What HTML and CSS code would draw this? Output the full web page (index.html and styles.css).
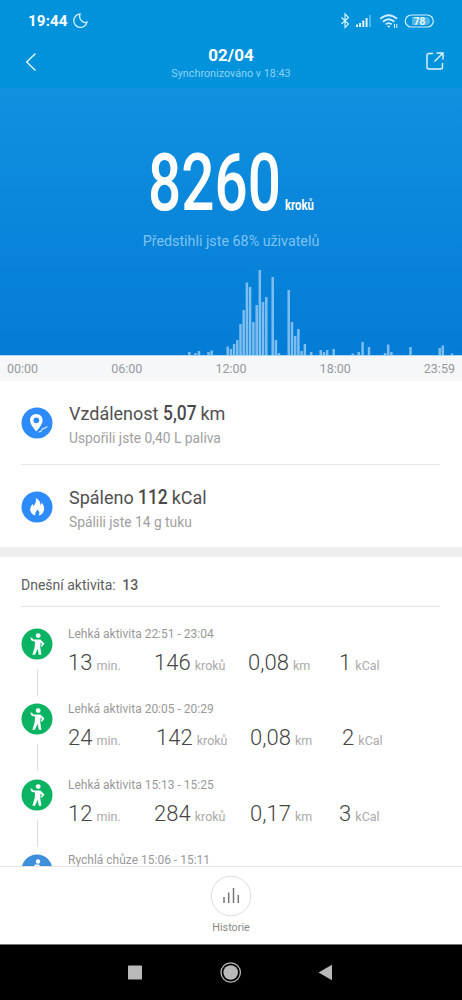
FILE: index.html
```html
<!DOCTYPE html>
<html lang="cs">
<head>
<meta charset="utf-8">
<title>Kroky</title>
<link rel="stylesheet" href="styles.css">
</head>
<body>
<svg class="defs" width="0" height="0">
  <symbol id="person" viewBox="0 0 32 32">
    <circle cx="17.2" cy="7.6" r="2.4"/>
    <path d="M9.2 9.3l2.1.7 1 1.5h7l4.2 4.1-2.6 3.2-.9-.8 1-2.2-1.5-1.1-.2 4.7 1.1 7.3h-2.5l-1.3-6-2.6 6h-2.6l2.2-7.2.5-5.8-3.7-1.2-1.2-3.2z"/>
  </symbol>
</svg>
<header class="top">
  <div class="status">
    <span class="clock">19:44</span>
    <svg class="moon" width="15" height="15" viewBox="0 0 15 15"><path d="M7 1A6.7 6.7 0 1 0 14 9.200C10.500 10.500 5.200 7 7 1Z"/></svg>
    <svg class="indicators" width="96" height="18" viewBox="0 0 96 18">
      <path class="line" d="M1.500 5.500l7 6.500-3.500 3.500V2l3.500 3.500-7 6.500"/>
      <path class="solid" d="M16 12.500h2V15h-2zM19 11h2v4h-2zM22.300 8.500h2V15h-2zM25.600 6h2v9h-2z"/>
      <path class="solid dim" d="M29 3h2v12h-2z"/>
      <path class="line wifi" d="M40.300 6.800Q48.700-.4 57 6.800M43 9.800q5.700-5 11.400 0M45.600 12.400q3.100-2.600 6.200 0"/>
      <path class="solid" d="M46.900 13.800h3.700l-1.800 2zM54 12h1v4h-1zM56.300 12h1v4h-1z"/>
      <rect class="line" x="65.300" y="3" width="28" height="12" rx="6"/>
      <path class="solid dim" d="M72 5h14q4 0 4 4t-4 4H72z"/>
      <text x="79.500" y="12.700">78</text>
    </svg>
  </div>
  <div class="bar">
    <svg class="back" width="12" height="20" viewBox="0 0 12 20"><path d="M10.500 1.500L1.700 10l8.800 8.500"/></svg>
    <div class="heading"><h1>02/04</h1><p>Synchronizováno v 18:43</p></div>
    <svg class="share" width="18" height="18" viewBox="0 0 18 18"><path d="M7 1.500H3Q1 1.500 1 3.500V15q0 2 2 2h11.500q2 0 2-2v-4M10.500 1H17v6.500M17 1L8.500 9.500"/></svg>
  </div>
</header>
<section class="hero">
  <div class="steps"><span class="count">8260</span><span class="unit">kroků</span></div>
  <p class="rank">Předstihli jste 68% uživatelů</p>
  <svg class="chart" width="462" height="90" viewBox="0 0 462 90">
    <path d="M189.300 90v-3M195.500 90v-2M199 90v-4M208.500 90v-3M211.700 90v-4.500M227.700 90v-8.500M230.900 90v-6M234.100 90v-11M237.300 90v-15M240.500 90v-31M243.700 90v-45M246.900 90v-72.500M250.100 90v-68M253.400 90v-33M256.700 90v-50M259.800 90v-85M263 90v-53M266.300 90v-58M272.700 90v-78M275.900 90v-15M279 90v-2M288.700 90v-65M292 90v-33M295.200 90v-19M298.400 90v-26M301.600 90v-4M304.900 90v-11M311.200 90v-3M320.700 90v-5M324 90v-3M327.200 90v-5M333.700 90v-6M352.700 90v-1.500M358.700 90v-3M362.600 90v-13M369 90v-8M385 90v-2M388.200 90v-10.500M391.400 90v-3M410.500 90v-8M439.700 90v-7M442.800 90v-9.500M452 90v-1.500"/>
  </svg>
</section>
<div class="hours"><span>00:00</span><span>06:00</span><span>12:00</span><span>18:00</span><span>23:59</span></div>
<main class="content">
  <section class="summary">
    <div class="fact">
      <svg width="32" height="32" viewBox="0 0 32 32"><circle class="blue" cx="16" cy="16" r="15.500"/><path class="white" fill-rule="evenodd" d="M15.300 7C11.600 7 9 9.800 9 13.300c0 3.300 3 7.400 6.300 11.200 3.200-3.800 6.300-7.800 6.300-11.200C21.600 9.800 19 7 15.300 7zm0 3.400a2.900 2.900 0 1 1 0 5.800 2.900 2.900 0 0 1 0-5.800z"/><path class="trail" d="M17.500 25c4.500.4 1.800-3.300 5.500-3.600 2.500-.2 1.500-1.700 3.600-1.700"/></svg>
      <div><h2>Vzdálenost <b class="distance">5,07</b> km</h2><p>Uspořili jste 0,40 L paliva</p></div>
    </div>
    <div class="fact">
      <svg width="32" height="32" viewBox="0 0 32 32"><circle class="blue" cx="16" cy="16" r="15.500"/><path class="white" d="M14.600 7c3.900 1.800 4.900 4.500 4.500 7 1-.5 1.300-1.400 1.300-2.400 2.100 2.100 3.200 4.800 2.500 7.600-.5 2.700-2.600 4.900-5.300 5.400 1.600-2.200.7-4.200-1.300-6-.3 1.800-2.700 2.800-2.100 6-3-.9-5.100-3.300-5-6.300.1-2.500 1.500-3.600 2.100-5.300.8.600 1.100 1.200 1.300 2.100C14.600 12.800 15.500 9.800 14.600 7z"/></svg>
      <div><h2>Spáleno <b class="energy">112</b> kCal</h2><p>Spálili jste 14 g tuku</p></div>
    </div>
  </section>
  <div class="divider"></div>
  <section class="today">
    <h3>Dnešní aktivita: <b>13</b></h3>
    <article class="activity">
      <div class="rail"><svg class="walk" width="32" height="32"><circle cx="16" cy="16" r="15.500"/><use href="#person"/></svg><i></i></div>
      <div><p>Lehká aktivita 22:51 - 23:04</p><div class="metrics first"><span><b>13</b> min.</span><span><b>146</b> kroků</span><span><b>0,08</b> km</span><span><b>1</b> kCal</span></div></div>
    </article>
    <article class="activity">
      <div class="rail"><svg class="walk" width="32" height="32"><circle cx="16" cy="16" r="15.500"/><use href="#person"/></svg><i></i></div>
      <div><p>Lehká aktivita 20:05 - 20:29</p><div class="metrics second"><span><b>24</b> min.</span><span><b>142</b> kroků</span><span><b>0,08</b> km</span><span><b>2</b> kCal</span></div></div>
    </article>
    <article class="activity">
      <div class="rail"><svg class="walk" width="32" height="32"><circle cx="16" cy="16" r="15.500"/><use href="#person"/></svg><i></i></div>
      <div><p>Lehká aktivita 15:13 - 15:25</p><div class="metrics third"><span><b>12</b> min.</span><span><b>284</b> kroků</span><span><b>0,17</b> km</span><span><b>3</b> kCal</span></div></div>
    </article>
    <article class="activity">
      <div class="rail"><svg class="walk fast" width="32" height="32"><circle cx="16" cy="16" r="15.500"/><circle class="white" cx="17" cy="7.500" r="2.200"/><path class="white" d="M14 10.500h4l3 5-3 1v8h-5v-8l-2-1z"/></svg></div>
      <div><p>Rychlá chůze 15:06 - 15:11</p></div>
    </article>
  </section>
</main>
<footer class="history">
  <svg width="42" height="42" viewBox="0 0 42 42"><circle cx="21" cy="21" r="19.800"/><path d="M14 28v-6M18.700 28V17.500M23.500 28V13M28.300 28v-8"/></svg>
  <span>Historie</span>
</footer>
<nav class="system">
  <svg width="462" height="55" viewBox="0 0 462 55"><rect x="128" y="20.500" width="14" height="14" rx=".7"/><circle cx="230.700" cy="27.500" r="7.300"/><circle class="ring" cx="230.700" cy="27.500" r="9.700"/><path d="M318.500 27.500L332 19.700v15.600z"/></svg>
</nav>
</body>
</html>
```
FILE: styles.css
```css
* { box-sizing: border-box; }
body {
  margin: 0;
  width: 462px;
  height: 1000px;
  overflow: hidden;
  display: flex;
  flex-direction: column;
  background: #fff;
  font-family: Roboto, "Liberation Sans", sans-serif;
  color: #505050;
}
h1, h2, h3, p { margin: 0; font-weight: 400; white-space: nowrap; }
svg { display: block; flex: none; }
.defs { position: absolute; }
.top { height: 88px; background: #0092db; color: #fff; flex: none; }
.status { display: flex; height: 42px; padding: 12px 26px 0 28px; }
.clock { font-size: 15.2px; font-weight: 700; line-height: 19px; width: 45px; letter-spacing: .1px; }
.moon { margin-top: 1px; fill: none; stroke: #d8f3ff; stroke-width: 1.3; }
.indicators { margin-left: auto; }
.indicators .line { fill: none; stroke: #d4efff; stroke-width: 1.2; }
.indicators .wifi { stroke-width: 1.8; }
.indicators .solid { fill: #e2f5ff; }
.indicators .dim { opacity: .35; }
.indicators text { font-size: 10px; font-weight: 700; fill: #e8f8ff; text-anchor: middle; }
.bar { display: flex; justify-content: space-between; padding: 0 18px 0 25px; }
.back { margin-top: 10px; fill: none; stroke: #e5f6ff; stroke-width: 1.4; }
.share { margin-top: 10px; fill: none; stroke: #e5f6ff; stroke-width: 1.4; }
.heading { text-align: center; padding-right: 1px; }
.heading h1 { font-size: 17px; line-height: 20px; font-weight: 700; padding-top: 3px; }
.heading p { font-size: 10.8px; line-height: 14px; margin-top: 2px; color: #8ed3f6; }
.hero {
  height: 268px;
  flex: none;
  display: flex;
  flex-direction: column;
  background: linear-gradient(#1090df, #037cd6);
  border-bottom: 1px solid #aad9f8;
}
.steps { height: 144px; display: flex; align-items: baseline; padding: 55px 0 0 148px; color: #fff; }
.count { width: 137px; font-size: 79px; line-height: 80px; font-weight: 500; transform: scaleX(.74); transform-origin: left; }
.unit { font-size: 14.500px; font-weight: 700; transform: scaleX(.78); transform-origin: left; }
.rank { font-size: 14.300px; line-height: 18px; text-align: center; color: #7fc3f2; }
.chart { margin-top: auto; fill: none; stroke: #7dbdef; stroke-width: 2.500; }
.hours { display: flex; justify-content: space-between; height: 25px; flex: none; padding: 4px 7px 0; background: #f5f7f9; color: #969a9d; font-size: 12.500px; line-height: 17px; }
.content { height: 485px; flex: none; overflow: hidden; }
.summary { height: 166px; }
.fact { display: flex; gap: 16px; height: 83px; margin: 0 22px 0 21px; padding-top: 21px; }
.fact + .fact { border-top: 1px solid #e7e7e7; }
.fact > svg { margin-top: 5px; }
.fact h2 { font-size: 18px; line-height: 22px; }
.fact h2 b { display: inline-block; font-size: 21px; font-weight: 500; line-height: 22px; transform: scaleX(.83); transform-origin: left; color: #4a4a4a; }
.distance { width: 33px; }
.energy { width: 29px; }
.fact p { font-size: 13.800px; line-height: 18px; margin-top: 4px; color: #a0a0a0; }
.blue { fill: #2d8bfb; }
.white { fill: #fff; }
.trail { fill: none; stroke: #d9ebff; stroke-width: 1.100; }
.divider { height: 10px; background: #eeeff0; }
.today { padding-left: 21px; }
.today h3 { height: 50px; margin: 0 22px 20px 0; padding-top: 19px; border-bottom: 1px solid #e4e4e4; font-size: 14px; line-height: 18px; color: #5d5d5d; }
.today h3 b { font-weight: 500; margin-left: 3px; }
.activity { display: flex; gap: 15px; height: 75.300px; }
.rail { width: 32px; }
.rail > svg { margin-top: 1px; }
.rail i { display: block; width: 1px; height: 27px; margin: 9px 0 0 16px; background: #dedede; }
.walk { fill: #fff; }
.walk > circle:first-child { fill: #0bb363; }
.walk.fast > circle:first-child { fill: #3d8fdc; }
.activity p { font-size: 12px; line-height: 15px; color: #999; }
.metrics { display: grid; font-size: 12.500px; line-height: 26px; margin-top: 8px; color: #aaa; white-space: nowrap; }
.metrics b { font-size: 22px; font-weight: 300; color: #454545; margin-right: 1px; }
.first { grid-template-columns: 86px 94px 91px 60px; }
.second { grid-template-columns: 88px 94px 92px 60px; }
.third { grid-template-columns: 86px 96px 89px 60px; }
.history { height: 78px; flex: none; border-top: 1px solid #e2e2e2; display: flex; flex-direction: column; align-items: center; padding-top: 8px; background: #fff; }
.history circle { fill: none; stroke: #dcdcdc; }
.history path { stroke: #777; stroke-width: 1.500; }
.history span { font-size: 10.800px; line-height: 14px; margin-top: 4px; color: #888; }
.system { height: 56px; flex: none; background: #000; border-top: 1px solid #777; }
.system svg { fill: #b9b9b9; }
.system .ring { fill: none; stroke: #b9b9b9; stroke-width: 1.300; }
```
